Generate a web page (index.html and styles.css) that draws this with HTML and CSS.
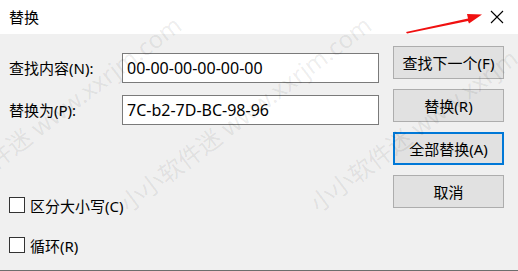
FILE: index.html
```html
<!DOCTYPE html>
<html lang="zh-CN">
<head>
    <meta charset="UTF-8">
    <meta name="viewport" content="width=device-width, initial-scale=1.0">
    <title>替换</title>
    <link rel="stylesheet" href="styles.css">
</head>
<body>
    <div class="dialog">
        <div class="titlebar">
            <span class="title">替换</span>
            <svg class="close" width="14" height="14" viewBox="0 0 14 14">
                <path d="M1 1 L13 13 M13 1 L1 13" stroke="#000" stroke-width="1.1" fill="none"/>
            </svg>
            <svg class="arrow" width="90" height="26" viewBox="0 0 90 26">
                <polygon points="0,20 62,6.5 61,2 76,2.5 63,11.5 62,9 1,21.5" fill="#f01010"/>
            </svg>
        </div>
        <div class="content">
            <div class="left">
                <div class="fields">
                    <label for="find-what">查找内容(N):</label>
                    <input type="text" id="find-what" value="00-00-00-00-00-00">
                    <label for="replace-with">替换为(P):</label>
                    <input type="text" id="replace-with" value="7C-b2-7D-BC-98-96">
                </div>
                <div class="options">
                    <label class="option"><span class="box"></span>区分大小写(C)</label>
                    <label class="option"><span class="box"></span>循环(R)</label>
                </div>
            </div>
            <div class="buttons">
                <button class="btn">查找下一个(F)</button>
                <button class="btn">替换(R)</button>
                <button class="btn focused">全部替换(A)</button>
                <button class="btn">取消</button>
            </div>
        </div>
        <div class="watermark">
            <span class="mark mark-1">小小软件迷 www.xxrjm.com</span>
            <span class="mark mark-2">小小软件迷 www.xxrjm.com</span>
            <span class="mark mark-3">小小软件迷 www.xxrjm.com</span>
        </div>
    </div>
</body>
</html>
```

FILE: styles.css
```css
body {
    margin: 0;
    font-family: "Noto Sans", "Noto Sans CJK SC", sans-serif;
    font-size: 15px;
    color: #000;
    background-color: #f0f0f0;
}
.dialog {
    position: relative;
    width: 518px;
    height: 271px;
    overflow: hidden;
    border-bottom: 1px solid #6e6e6e;
    box-sizing: border-box;
}
.titlebar {
    position: relative;
    height: 34px;
    background-color: #ffffff;
    display: flex;
    align-items: center;
    padding-left: 9px;
}
.title {
    font-size: 15px;
    line-height: 20px;
}
.close {
    position: absolute;
    left: 490px;
    top: 10px;
}
.arrow {
    position: absolute;
    left: 406px;
    top: 12px;
}
.content {
    display: flex;
    padding: 12px 0 0 9px;
    height: 236px;
    box-sizing: border-box;
}
.left {
    width: 370px;
    padding-top: 7px;
}
.fields {
    display: grid;
    grid-template-columns: 113px 257px;
    row-gap: 12px;
    align-items: center;
}
.fields label {
    line-height: 20px;
}
.fields input {
    height: 30px;
    box-sizing: border-box;
    border: 1px solid #7a7a7a;
    background-color: #ffffff;
    padding: 0 4px;
    font-family: "Noto Sans", "Noto Sans CJK SC", sans-serif;
    font-size: 16px;
    color: #000;
    outline: none;
}
.options {
    margin-top: 70px;
    display: flex;
    flex-direction: column;
    gap: 20px;
}
.option {
    display: flex;
    align-items: center;
    height: 20px;
    gap: 5px;
}
.box {
    width: 16px;
    height: 16px;
    box-sizing: border-box;
    border: 1px solid #333333;
    background-color: #ffffff;
}
.buttons {
    margin-left: 14px;
    display: flex;
    flex-direction: column;
    gap: 10px;
}
.btn {
    width: 111px;
    height: 33px;
    box-sizing: border-box;
    border: 1px solid #adadad;
    background-color: #e1e1e1;
    font-family: "Noto Sans", "Noto Sans CJK SC", sans-serif;
    font-size: 15px;
    color: #000;
    padding: 0;
}
.btn.focused {
    border: 2px solid #0078d7;
}
.watermark {
    position: absolute;
    left: 0;
    top: 0;
    width: 518px;
    height: 271px;
    pointer-events: none;
}
.mark {
    position: absolute;
    top: 192px;
    white-space: nowrap;
    font-size: 24px;
    line-height: 24px;
    color: rgba(0, 0, 0, 0.08);
    transform: rotate(-37deg);
    transform-origin: left bottom;
}
.mark-1 {
    left: -60px;
}
.mark-2 {
    left: 130px;
}
.mark-3 {
    left: 320px;
}
```
